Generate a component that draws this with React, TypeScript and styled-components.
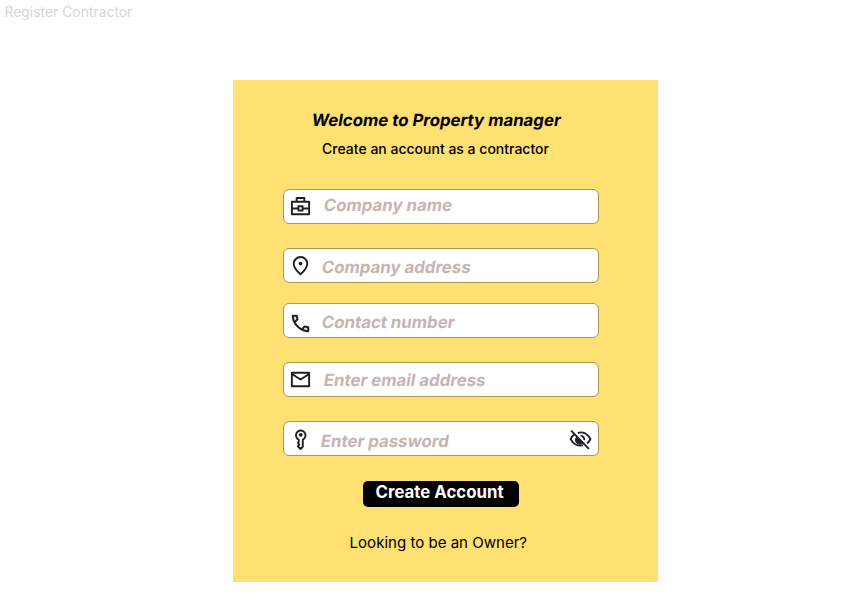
import React from "react";
import styled, { createGlobalStyle } from "styled-components";

const GlobalStyle = createGlobalStyle`
  * { box-sizing: border-box; }
  body { margin: 0; background: #fff; font-family: Inter, sans-serif; color: #000; }
`;

const Page = styled.main`
  width: 856px;
  height: 600px;
  overflow: hidden;
  display: flex;
  flex-direction: column;
`;

const FrameName = styled.div`
  height: 80px;
  padding: 2px 0 0 4.5px;
  font-size: 13.9px;
  line-height: 18px;
  color: #d6d6d6;
  transform: translateY(0.5px);
`;

const Card = styled.section`
  width: 425px;
  height: 502px;
  margin-left: 233.4px;
  padding-left: 49.2px;
  background: #fee172;
  display: flex;
  flex-direction: column;
`;

const Title = styled.h1`
  margin: 30px 0 0 29.5px;
  font-size: 16.75px;
  line-height: 20px;
  font-weight: 700;
  white-space: nowrap;
  transform: skewX(-9.4deg);
`;

const Subtitle = styled.p`
  margin: 9px 0 0 39.5px;
  font-size: 14px;
  line-height: 18px;
  font-weight: 500;
  white-space: nowrap;
  transform: translateY(0.5px);
`;

const Form = styled.div`
  display: flex;
  flex-direction: column;
  margin-top: 32px;
`;

const Field = styled.label<{ $gap: number }>`
  display: flex;
  width: 316px;
  height: 35px;
  margin-bottom: ${(p) => p.$gap}px;
  padding: 0 6px 0 5px;
  background: #fff;
  border: 1px solid #a99758;
  border-radius: 6px;
`;

const Icon = styled.svg<{ $top: number }>`
  flex: none;
  width: 23px;
  height: 23px;
  margin-top: ${(p) => p.$top}px;
  overflow: visible;
  fill: none;
  stroke: #202124;
  stroke-width: 2;
`;

const Hint = styled.span<{ $left: number; $top: number }>`
  flex: 1;
  height: 20px;
  margin: ${(p) => p.$top}px 0 0 ${(p) => p.$left}px;
  font-size: 16.8px;
  line-height: 20px;
  font-weight: 700;
  color: #c4b5b5;
  white-space: nowrap;
  transform: skewX(-9.4deg);
`;

const Submit = styled.button`
  width: 156px;
  height: 26px;
  margin: 0 0 0 80px;
  padding: 0 2px 4px 0;
  border: 0;
  border-radius: 5px;
  background: #000;
  color: #fff;
  font: 700 16.8px/20px Inter, sans-serif;
  white-space: nowrap;
`;

const OwnerLink = styled.a`
  margin: 26px 0 0 67px;
  font-size: 15.05px;
  line-height: 20px;
  white-space: nowrap;
`;

const BriefcaseIcon = () => (
  <Icon $top={4.5} viewBox="0 0 24 24">
    <path d="M3 7h18v13H3zM8 7V3.2h8V7M3 14h6.5M14.5 14H21M9.8 11.7h4.4v4.4H9.8z" strokeLinejoin="round" />
  </Icon>
);

const PinIcon = () => (
  <Icon $top={5} viewBox="0 0 24 24">
    <path d="M12 21.2C7.2 17 4.9 13.4 4.9 10.2a7.1 7.1 0 0 1 14.2 0c0 3.2-2.3 6.8-7.1 11z" />
    <circle cx="12" cy="10" r="2" fill="#202124" stroke="none" />
  </Icon>
);

const PhoneIcon = () => (
  <Icon $top={7.5} viewBox="0 0 24 24">
    <path
      d="M19.95 21q-3.125 0-6.175-1.362t-5.55-3.863-3.862-5.55T3 4.05q0-.45.3-.75t.75-.3H8.1q.35 0 .625.238t.325.562l.65 3.5q.05.4-.025.675T9.4 8.45L6.975 10.9q.5.925 1.187 1.787t1.513 1.663q.775.775 1.625 1.438T13.1 17l2.35-2.35q.225-.225.588-.337t.712-.063l3.45.7q.35.1.575.363T21 15.9v4.05q0 .45-.3.75t-.75.3M6.025 9l1.65-1.65L7.25 5H5.025q.125 1.025.35 2.025T6.025 9m8.95 8.95q.975.425 1.988.675T19 18.95v-2.2l-2.35-.475z"
      fill="#202124"
      stroke="#202124"
      strokeWidth="0.3"
    />
  </Icon>
);

const MailIcon = () => (
  <Icon $top={5} viewBox="0 0 24 24">
    <path d="M3 5h18v14H3zM3.5 6.5l8.5 5.5 8.5-5.5" strokeLinejoin="round" />
  </Icon>
);

const KeyIcon = () => (
  <Icon $top={6} viewBox="0 0 24 24">
    <path d="M10.1 12.1a5 5 0 1 1 4.3 0v7.5l-2.3 2.3-2.9-2.9 1.6-1.7-1.4-1.5 0.7-1z" strokeLinejoin="round" />
    <circle cx="12.3" cy="7.1" r="2" fill="#202124" stroke="none" />
  </Icon>
);

const HiddenIcon = () => (
  <Icon $top={6} viewBox="0 0 24 24">
    <path d="M2.2 2.8L20.8 21.8M9.2 5.2C14.5 3.4 19.5 6 22.3 11.5 21.5 13.5 20.3 15 18.8 16.2M5.7 6.6C3.9 7.9 2.5 9.6 1.7 11.5 4.5 17.5 9.7 19.3 14.6 17.9M12 8a4 4 0 0 1 3.9 4.7" />
    <path d="M8.2 9.5l6 6A4.2 4.2 0 0 1 8.2 9.5z" fill="#202124" strokeWidth="1.4" />
  </Icon>
);

export default function App() {
  return (
    <>
      <GlobalStyle />
      <Page>
        <FrameName>Register Contractor</FrameName>
        <Card>
          <Title>Welcome to Property manager</Title>
          <Subtitle>Create an account as a contractor</Subtitle>
          <Form>
            <Field $gap={24}>
              <BriefcaseIcon />
              <Hint $left={12.2} $top={5}>Company name</Hint>
            </Field>
            <Field $gap={20}>
              <PinIcon />
              <Hint $left={10} $top={8}>Company address</Hint>
            </Field>
            <Field $gap={24}>
              <PhoneIcon />
              <Hint $left={10} $top={8}>Contact number</Hint>
            </Field>
            <Field $gap={24}>
              <MailIcon />
              <Hint $left={12.2} $top={7}>Enter email address</Hint>
            </Field>
            <Field $gap={25}>
              <KeyIcon />
              <Hint $left={9.4} $top={9}>Enter password</Hint>
              <HiddenIcon />
            </Field>
          </Form>
          <Submit type="button">Create Account</Submit>
          <OwnerLink>Looking to be an Owner?</OwnerLink>
        </Card>
      </Page>
    </>
  );
}
